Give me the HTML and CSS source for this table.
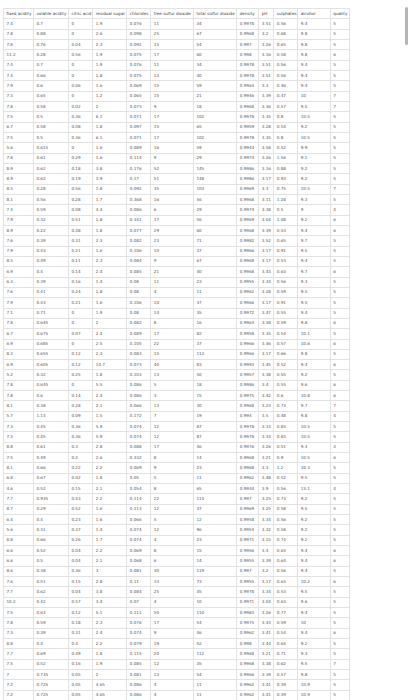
FILE: index.html
```html
<!DOCTYPE html>
<html>
<head>
<meta charset="utf-8">
<link rel="stylesheet" href="styles.css">
</head>
<body>
<div class="page">
<table class="data">
<colgroup>
<col class="c1"><col class="c2"><col class="c3"><col class="c4"><col class="c5"><col class="c6"><col class="c7"><col class="c8"><col class="c9"><col class="c10"><col class="c11"><col class="c12">
</colgroup>
<thead>
<tr><th>fixed acidity</th><th>volatile acidity</th><th>citric acid</th><th>residual sugar</th><th>chlorides</th><th>free sulfur dioxide</th><th>total sulfur dioxide</th><th>density</th><th>pH</th><th>sulphates</th><th>alcohol</th><th>quality</th></tr>
</thead>
<tbody>
<tr><td>7.4<td>0.7<td>0<td>1.9<td>0.076<td>11<td>34<td>0.9978<td>3.51<td>0.56<td>9.4<td>5</tr>
<tr><td>7.8<td>0.88<td>0<td>2.6<td>0.098<td>25<td>67<td>0.9968<td>3.2<td>0.68<td>9.8<td>5</tr>
<tr><td>7.8<td>0.76<td>0.04<td>2.3<td>0.092<td>15<td>54<td>0.997<td>3.26<td>0.65<td>9.8<td>5</tr>
<tr><td>11.2<td>0.28<td>0.56<td>1.9<td>0.075<td>17<td>60<td>0.998<td>3.16<td>0.58<td>9.8<td>6</tr>
<tr><td>7.4<td>0.7<td>0<td>1.9<td>0.076<td>11<td>34<td>0.9978<td>3.51<td>0.56<td>9.4<td>5</tr>
<tr><td>7.4<td>0.66<td>0<td>1.8<td>0.075<td>13<td>40<td>0.9978<td>3.51<td>0.56<td>9.4<td>5</tr>
<tr><td>7.9<td>0.6<td>0.06<td>1.6<td>0.069<td>15<td>59<td>0.9964<td>3.3<td>0.46<td>9.4<td>5</tr>
<tr><td>7.3<td>0.65<td>0<td>1.2<td>0.065<td>15<td>21<td>0.9946<td>3.39<td>0.47<td>10<td>7</tr>
<tr><td>7.8<td>0.58<td>0.02<td>2<td>0.073<td>9<td>18<td>0.9968<td>3.36<td>0.57<td>9.5<td>7</tr>
<tr><td>7.5<td>0.5<td>0.36<td>6.1<td>0.071<td>17<td>102<td>0.9978<td>3.35<td>0.8<td>10.5<td>5</tr>
<tr><td>6.7<td>0.58<td>0.08<td>1.8<td>0.097<td>15<td>65<td>0.9959<td>3.28<td>0.54<td>9.2<td>5</tr>
<tr><td>7.5<td>0.5<td>0.36<td>6.1<td>0.071<td>17<td>102<td>0.9978<td>3.35<td>0.8<td>10.5<td>5</tr>
<tr><td>5.6<td>0.615<td>0<td>1.6<td>0.089<td>16<td>59<td>0.9943<td>3.58<td>0.52<td>9.9<td>5</tr>
<tr><td>7.8<td>0.61<td>0.29<td>1.6<td>0.114<td>9<td>29<td>0.9974<td>3.26<td>1.56<td>9.1<td>5</tr>
<tr><td>8.9<td>0.62<td>0.18<td>3.8<td>0.176<td>52<td>145<td>0.9986<td>3.16<td>0.88<td>9.2<td>5</tr>
<tr><td>8.9<td>0.62<td>0.19<td>3.9<td>0.17<td>51<td>148<td>0.9986<td>3.17<td>0.93<td>9.2<td>5</tr>
<tr><td>8.5<td>0.28<td>0.56<td>1.8<td>0.092<td>35<td>103<td>0.9969<td>3.3<td>0.75<td>10.5<td>7</tr>
<tr><td>8.1<td>0.56<td>0.28<td>1.7<td>0.368<td>16<td>56<td>0.9968<td>3.11<td>1.28<td>9.3<td>5</tr>
<tr><td>7.4<td>0.59<td>0.08<td>4.4<td>0.086<td>6<td>29<td>0.9974<td>3.38<td>0.5<td>9<td>4</tr>
<tr><td>7.9<td>0.32<td>0.51<td>1.8<td>0.341<td>17<td>56<td>0.9969<td>3.04<td>1.08<td>9.2<td>6</tr>
<tr><td>8.9<td>0.22<td>0.48<td>1.8<td>0.077<td>29<td>60<td>0.9968<td>3.39<td>0.53<td>9.4<td>6</tr>
<tr><td>7.6<td>0.39<td>0.31<td>2.3<td>0.082<td>23<td>71<td>0.9982<td>3.52<td>0.65<td>9.7<td>5</tr>
<tr><td>7.9<td>0.43<td>0.21<td>1.6<td>0.106<td>10<td>37<td>0.9966<td>3.17<td>0.91<td>9.5<td>5</tr>
<tr><td>8.5<td>0.49<td>0.11<td>2.3<td>0.084<td>9<td>67<td>0.9968<td>3.17<td>0.53<td>9.4<td>5</tr>
<tr><td>6.9<td>0.4<td>0.14<td>2.4<td>0.085<td>21<td>40<td>0.9968<td>3.43<td>0.63<td>9.7<td>6</tr>
<tr><td>6.3<td>0.39<td>0.16<td>1.4<td>0.08<td>11<td>23<td>0.9955<td>3.34<td>0.56<td>9.3<td>5</tr>
<tr><td>7.6<td>0.41<td>0.24<td>1.8<td>0.08<td>4<td>11<td>0.9962<td>3.28<td>0.59<td>9.5<td>5</tr>
<tr><td>7.9<td>0.43<td>0.21<td>1.6<td>0.106<td>10<td>37<td>0.9966<td>3.17<td>0.91<td>9.5<td>5</tr>
<tr><td>7.1<td>0.71<td>0<td>1.9<td>0.08<td>14<td>35<td>0.9972<td>3.47<td>0.55<td>9.4<td>5</tr>
<tr><td>7.8<td>0.645<td>0<td>2<td>0.082<td>8<td>16<td>0.9964<td>3.38<td>0.59<td>9.8<td>6</tr>
<tr><td>6.7<td>0.675<td>0.07<td>2.4<td>0.089<td>17<td>82<td>0.9958<td>3.35<td>0.54<td>10.1<td>5</tr>
<tr><td>6.9<td>0.685<td>0<td>2.5<td>0.105<td>22<td>37<td>0.9966<td>3.46<td>0.57<td>10.6<td>6</tr>
<tr><td>8.3<td>0.655<td>0.12<td>2.3<td>0.083<td>15<td>113<td>0.9966<td>3.17<td>0.66<td>9.8<td>5</tr>
<tr><td>6.9<td>0.605<td>0.12<td>10.7<td>0.073<td>40<td>83<td>0.9993<td>3.45<td>0.52<td>9.4<td>6</tr>
<tr><td>5.2<td>0.32<td>0.25<td>1.8<td>0.103<td>13<td>50<td>0.9957<td>3.38<td>0.55<td>9.2<td>5</tr>
<tr><td>7.8<td>0.645<td>0<td>5.5<td>0.086<td>5<td>18<td>0.9986<td>3.4<td>0.55<td>9.6<td>6</tr>
<tr><td>7.8<td>0.6<td>0.14<td>2.4<td>0.086<td>3<td>15<td>0.9975<td>3.42<td>0.6<td>10.8<td>6</tr>
<tr><td>8.1<td>0.38<td>0.28<td>2.1<td>0.066<td>13<td>30<td>0.9968<td>3.23<td>0.73<td>9.7<td>7</tr>
<tr><td>5.7<td>1.13<td>0.09<td>1.5<td>0.172<td>7<td>19<td>0.994<td>3.5<td>0.48<td>9.8<td>4</tr>
<tr><td>7.3<td>0.45<td>0.36<td>5.9<td>0.074<td>12<td>87<td>0.9978<td>3.33<td>0.83<td>10.5<td>5</tr>
<tr><td>7.3<td>0.45<td>0.36<td>5.9<td>0.074<td>12<td>87<td>0.9978<td>3.33<td>0.83<td>10.5<td>5</tr>
<tr><td>8.8<td>0.61<td>0.3<td>2.8<td>0.088<td>17<td>46<td>0.9976<td>3.26<td>0.51<td>9.3<td>4</tr>
<tr><td>7.5<td>0.49<td>0.2<td>2.6<td>0.332<td>8<td>14<td>0.9968<td>3.21<td>0.9<td>10.5<td>6</tr>
<tr><td>8.1<td>0.66<td>0.22<td>2.2<td>0.069<td>9<td>23<td>0.9968<td>3.3<td>1.2<td>10.3<td>5</tr>
<tr><td>6.8<td>0.67<td>0.02<td>1.8<td>0.05<td>5<td>11<td>0.9962<td>3.48<td>0.52<td>9.5<td>5</tr>
<tr><td>4.6<td>0.52<td>0.15<td>2.1<td>0.054<td>8<td>65<td>0.9934<td>3.9<td>0.56<td>13.1<td>4</tr>
<tr><td>7.7<td>0.935<td>0.43<td>2.2<td>0.114<td>22<td>114<td>0.997<td>3.25<td>0.73<td>9.2<td>5</tr>
<tr><td>8.7<td>0.29<td>0.52<td>1.6<td>0.113<td>12<td>37<td>0.9969<td>3.25<td>0.58<td>9.5<td>5</tr>
<tr><td>6.4<td>0.4<td>0.23<td>1.6<td>0.066<td>5<td>12<td>0.9958<td>3.34<td>0.56<td>9.2<td>5</tr>
<tr><td>5.6<td>0.31<td>0.37<td>1.4<td>0.074<td>12<td>96<td>0.9954<td>3.32<td>0.58<td>9.2<td>5</tr>
<tr><td>8.8<td>0.66<td>0.26<td>1.7<td>0.074<td>4<td>23<td>0.9971<td>3.15<td>0.74<td>9.2<td>5</tr>
<tr><td>6.6<td>0.52<td>0.04<td>2.2<td>0.069<td>8<td>15<td>0.9956<td>3.4<td>0.63<td>9.4<td>6</tr>
<tr><td>6.6<td>0.5<td>0.04<td>2.1<td>0.068<td>6<td>14<td>0.9955<td>3.39<td>0.64<td>9.4<td>6</tr>
<tr><td>8.6<td>0.38<td>0.36<td>3<td>0.081<td>30<td>119<td>0.997<td>3.2<td>0.56<td>9.4<td>5</tr>
<tr><td>7.6<td>0.51<td>0.15<td>2.8<td>0.11<td>33<td>73<td>0.9955<td>3.17<td>0.63<td>10.2<td>6</tr>
<tr><td>7.7<td>0.62<td>0.04<td>3.8<td>0.084<td>25<td>45<td>0.9978<td>3.34<td>0.53<td>9.5<td>5</tr>
<tr><td>10.2<td>0.42<td>0.57<td>3.4<td>0.07<td>4<td>10<td>0.9971<td>3.04<td>0.63<td>9.6<td>5</tr>
<tr><td>7.5<td>0.63<td>0.12<td>5.1<td>0.111<td>50<td>110<td>0.9983<td>3.26<td>0.77<td>9.4<td>5</tr>
<tr><td>7.8<td>0.59<td>0.18<td>2.3<td>0.076<td>17<td>54<td>0.9975<td>3.43<td>0.59<td>10<td>5</tr>
<tr><td>7.3<td>0.39<td>0.31<td>2.4<td>0.074<td>9<td>46<td>0.9962<td>3.41<td>0.54<td>9.4<td>6</tr>
<tr><td>8.8<td>0.4<td>0.4<td>2.2<td>0.079<td>19<td>52<td>0.998<td>3.44<td>0.64<td>9.2<td>5</tr>
<tr><td>7.7<td>0.69<td>0.49<td>1.8<td>0.115<td>20<td>112<td>0.9968<td>3.21<td>0.71<td>9.3<td>5</tr>
<tr><td>7.5<td>0.52<td>0.16<td>1.9<td>0.085<td>12<td>35<td>0.9968<td>3.38<td>0.62<td>9.5<td>7</tr>
<tr><td>7<td>0.735<td>0.05<td>2<td>0.081<td>13<td>54<td>0.9966<td>3.39<td>0.57<td>9.8<td>5</tr>
<tr><td>7.2<td>0.725<td>0.05<td>4.65<td>0.086<td>4<td>11<td>0.9962<td>3.41<td>0.39<td>10.9<td>5</tr>
<tr><td>7.2<td>0.725<td>0.05<td>4.65<td>0.086<td>4<td>11<td>0.9962<td>3.41<td>0.39<td>10.9<td>5</tr>
<tr><td>7.5<td>0.52<td>0.11<td>1.5<td>0.079<td>11<td>39<td>0.9968<td>3.42<td>0.58<td>9.6<td>5</tr>
</tbody>
</table>
</div>
<div class="scroll-thumb"></div>
</body>
</html>
```

FILE: styles.css
```css
html, body {
  margin: 0;
  padding: 0;
  background: #ffffff;
  overflow: hidden;
}

body {
  font-family: "DejaVu Sans", Verdana, sans-serif;
  color: #555555;
}

.page {
  padding: 8px 0 0 3px;
}

.data {
  border-collapse: collapse;
  table-layout: fixed;
  width: 346px;
  font-size: 4.1px;
}

.c1 { width: 30px; }
.c2 { width: 35px; }
.c3 { width: 24.4px; }
.c4 { width: 34px; }
.c5 { width: 24px; }
.c6 { width: 42.6px; }
.c7 { width: 43.4px; }
.c8 { width: 22px; }
.c9 { width: 15px; }
.c10 { width: 24px; }
.c11 { width: 32.6px; }
.c12 { width: 19px; }

.data tr {
  height: 10.33px;
}

.data th,
.data td {
  border: 0.6px solid #e2e2e2;
  padding: 0 2.4px;
  line-height: 1;
  text-align: left;
  vertical-align: middle;
  white-space: nowrap;
  overflow: hidden;
}

.data th {
  font-weight: normal;
  color: #444444;
}

.scroll-thumb {
  position: absolute;
  top: 7px;
  left: 405px;
  width: 3px;
  height: 38px;
  border-radius: 2px;
  background: #b5b5b5;
}
```
